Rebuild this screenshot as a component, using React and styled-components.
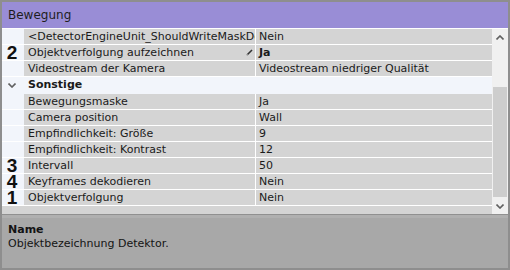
import React from 'react';
import styled, { createGlobalStyle } from 'styled-components';

const GlobalStyle = createGlobalStyle`
  html, body {
    margin: 0;
    padding: 0;
    background: #ffffff;
  }
  body {
    font-family: 'DejaVu Sans', Verdana, sans-serif;
  }
`;

const Frame = styled.div`
  width: 510px;
  height: 270px;
  box-sizing: border-box;
  border: 2px solid #8e8e8e;
  display: flex;
  flex-direction: column;
  background: #a8a8a8;
  overflow: hidden;
`;

const Header = styled.div`
  height: 26px;
  flex-shrink: 0;
  background: #998dd6;
  border-bottom: 1px solid #ffffff;
  display: flex;
  align-items: center;
  padding-left: 6px;
  font-size: 12px;
  color: #1e1e1e;
`;

const GridArea = styled.div`
  height: 185px;
  flex-shrink: 0;
  display: flex;
`;

const Rows = styled.div`
  flex: 1;
  background: #d4d4d4;
  display: flex;
  flex-direction: column;
`;

const Row = styled.div`
  display: grid;
  grid-template-columns: 22px 231px 1fr;
  height: ${(p) => (p.$category ? 17 : 16)}px;
  box-sizing: border-box;
  border-bottom: 1px solid ${(p) => (p.$category ? '#f2f5fb' : '#ffffff')};
  background: ${(p) => (p.$category ? '#f2f5fb' : 'transparent')};
  font-size: 11px;
  line-height: 15px;
  color: #1a1a1a;
`;

const Gutter = styled.div`
  background: #f2f5fb;
  display: flex;
  align-items: center;
  justify-content: center;
  padding-right: 2px;
`;

const Mark = styled.span`
  font-family: 'Liberation Sans', Arial, sans-serif;
  font-weight: bold;
  font-size: 19px;
  line-height: 15px;
  color: #111111;
`;

const NameCell = styled.div`
  position: relative;
  padding-left: 4px;
  white-space: nowrap;
  overflow: hidden;
`;

const CategoryName = styled.div`
  grid-column: 2 / 4;
  padding-left: 4px;
  font-weight: bold;
  line-height: 16px;
`;

const ValueCell = styled.div`
  border-left: 1px solid #ffffff;
  padding-left: 3px;
  white-space: nowrap;
  overflow: hidden;
  font-weight: ${(p) => (p.$bold ? 'bold' : 'normal')};
`;

const EditIcon = styled.svg`
  position: absolute;
  right: 2px;
  top: 4px;
`;

const ScrollBar = styled.div`
  width: 16px;
  background: #f0f0f0;
  display: flex;
  flex-direction: column;
`;

const ArrowButton = styled.div`
  height: 16px;
  display: flex;
  align-items: center;
  justify-content: center;
`;

const Track = styled.div`
  flex: 1;
  display: flex;
  flex-direction: column;
  padding-top: 42px;
`;

const Thumb = styled.div`
  height: 110px;
  margin: 0 1px;
  background: #cdcdcd;
`;

const Splitter = styled.div`
  height: 3px;
  flex-shrink: 0;
  background: #b0b0b0;
  border-top: 1px solid #909090;
`;

const Description = styled.div`
  flex: 1;
  background: #a8a8a8;
  padding: 5px 6px;
  font-size: 11px;
  line-height: 14px;
  color: #141414;
`;

const DescTitle = styled.div`
  font-weight: bold;
`;

const Chevron = ({ up }) => (
  <svg width="8" height="5" viewBox="0 0 8 5">
    <path
      d={up ? 'M0.5 4.5 L4 1 L7.5 4.5' : 'M0.5 0.5 L4 4 L7.5 0.5'}
      fill="none"
      stroke="#606060"
      strokeWidth="1.6"
    />
  </svg>
);

const topRows = [
  { name: '<DetectorEngineUnit_ShouldWriteMaskDefault>', value: 'Nein' },
  { name: 'Objektverfolgung aufzeichnen', value: 'Ja', bold: true, mark: '2', edit: true },
  { name: 'Videostream der Kamera', value: 'Videostream niedriger Qualität' },
];

const otherRows = [
  { name: 'Bewegungsmaske', value: 'Ja' },
  { name: 'Camera position', value: 'Wall' },
  { name: 'Empfindlichkeit: Größe', value: '9' },
  { name: 'Empfindlichkeit: Kontrast', value: '12' },
  { name: 'Intervall', value: '50', mark: '3' },
  { name: 'Keyframes dekodieren', value: 'Nein', mark: '4' },
  { name: 'Objektverfolgung', value: 'Nein', mark: '1' },
];

const PropertyRow = ({ row }) => (
  <Row>
    <Gutter>{row.mark && <Mark>{row.mark}</Mark>}</Gutter>
    <NameCell>
      {row.name}
      {row.edit && (
        <EditIcon width="7" height="7" viewBox="0 0 7 7">
          <path d="M1 6 L6 1" stroke="#333333" strokeWidth="1.6" />
          <path d="M0.5 6.5 L1.6 5.4" stroke="#bbbbbb" strokeWidth="1.2" />
        </EditIcon>
      )}
    </NameCell>
    <ValueCell $bold={row.bold}>{row.value}</ValueCell>
  </Row>
);

export default function App() {
  return (
    <>
      <GlobalStyle />
      <Frame>
        <Header>Bewegung</Header>
        <GridArea>
          <Rows>
            {topRows.map((row) => (
              <PropertyRow key={row.name} row={row} />
            ))}
            <Row $category>
              <Gutter>
                <Chevron />
              </Gutter>
              <CategoryName>Sonstige</CategoryName>
            </Row>
            {otherRows.map((row) => (
              <PropertyRow key={row.name} row={row} />
            ))}
          </Rows>
          <ScrollBar>
            <ArrowButton>
              <Chevron up />
            </ArrowButton>
            <Track>
              <Thumb />
            </Track>
            <ArrowButton>
              <Chevron />
            </ArrowButton>
          </ScrollBar>
        </GridArea>
        <Splitter />
        <Description>
          <DescTitle>Name</DescTitle>
          <div>Objektbezeichnung Detektor.</div>
        </Description>
      </Frame>
    </>
  );
}
